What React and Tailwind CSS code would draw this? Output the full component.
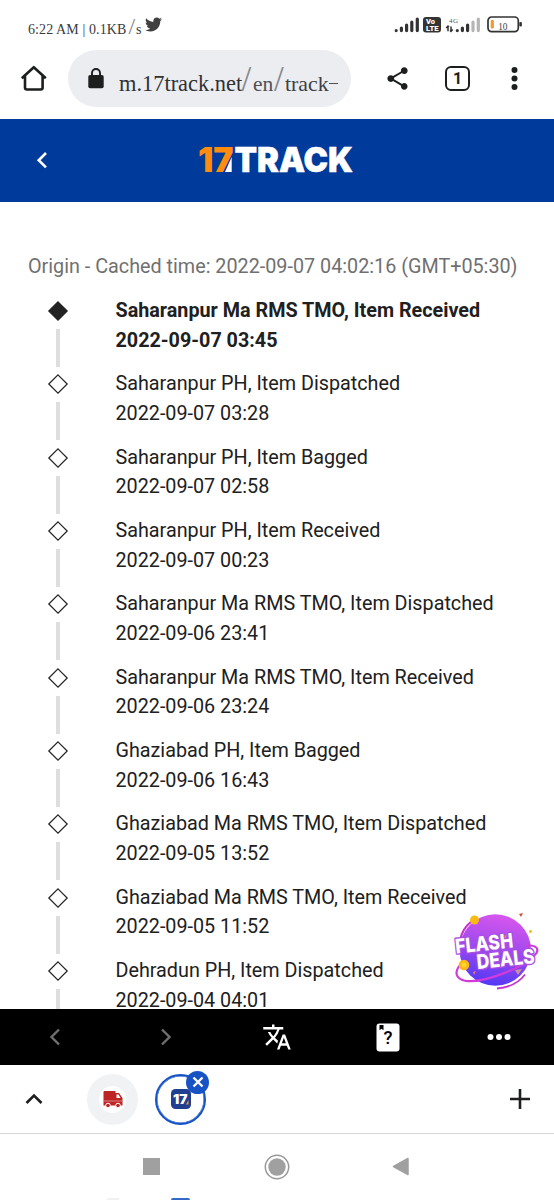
import React from 'react';
import { FaTwitter } from 'react-icons/fa';
import { MdShare, MdTranslate } from 'react-icons/md';

const events = [
  { text: 'Saharanpur Ma RMS TMO, Item Received', time: '2022-09-07 03:45' },
  { text: 'Saharanpur PH, Item Dispatched', time: '2022-09-07 03:28' },
  { text: 'Saharanpur PH, Item Bagged', time: '2022-09-07 02:58' },
  { text: 'Saharanpur PH, Item Received', time: '2022-09-07 00:23' },
  { text: 'Saharanpur Ma RMS TMO, Item Dispatched', time: '2022-09-06 23:41' },
  { text: 'Saharanpur Ma RMS TMO, Item Received', time: '2022-09-06 23:24' },
  { text: 'Ghaziabad PH, Item Bagged', time: '2022-09-06 16:43' },
  { text: 'Ghaziabad Ma RMS TMO, Item Dispatched', time: '2022-09-05 13:52' },
  { text: 'Ghaziabad Ma RMS TMO, Item Received', time: '2022-09-05 11:52' },
  { text: 'Dehradun PH, Item Dispatched', time: '2022-09-04 04:01' },
];

function StatusBar() {
  return (
    <div className="flex h-[50px] shrink-0 items-start pl-7 pr-[31px] text-[#3b3b3b]">
      <div className="mt-4 flex items-baseline whitespace-nowrap font-['Liberation_Serif',serif] text-[14px] leading-5">
        <span className="w-[100.5px] tracking-[0.1px]">6:22 AM | 0.1KB</span>
        <span className="w-[7.5px] text-[24px] text-[#888]">/</span>
        <span>s</span>
      </div>
      <FaTwitter className="ml-[4px] mt-[15.5px] h-[17px] w-[17px] text-[#404040]" />
      <div className="ml-auto mt-4 flex items-start">
        <svg width="26" height="17" viewBox="0 0 26 17" stroke="#333" strokeWidth="3.2" strokeLinecap="round">
          <path d="M2.2 14.5v.1M7.4 12v2.6M12.6 9v5.6M17.8 6v8.6M23.3 3v11.6" />
        </svg>
        <svg className="ml-[3px] overflow-visible" width="18" height="17" viewBox="0 0 18 17">
          <rect y="1" width="18" height="15.5" rx="3" fill="#343434" />
          <g fill="#fff" fontFamily="Roboto, sans-serif" fontWeight="900" fontSize="7.2">
            <text x="3" y="8" textLength="9" lengthAdjust="spacingAndGlyphs">Vo</text>
            <text x="3" y="14.6" textLength="12.5" lengthAdjust="spacingAndGlyphs">LTE</text>
          </g>
        </svg>
        <svg className="ml-1 overflow-visible" width="36" height="17" viewBox="0 0 36 17">
          <text x="4" y="7.3" fontFamily="Liberation Serif, serif" fontSize="7" fill="#555" textLength="9">4G</text>
          <path d="M3 15.2v-5M1.2 12l1.8-2 1 1M6 10.4v5M7.8 13.4 6 15.4l-1-1" fill="none" stroke="#333" strokeWidth="1.5" />
          <g strokeWidth="3.2" strokeLinecap="round">
            <path d="M12.3 14.5v.1M17.4 12v2.6M22.6 9v5.6" stroke="#333" />
            <path d="M28 6v8.6M33.3 3v11.6" stroke="#b5b5b5" />
          </g>
        </svg>
        <svg className="ml-1.5" width="36" height="17" viewBox="0 0 36 17">
          <rect x="1" y="1" width="30.3" height="14.6" rx="3.6" fill="#fff" stroke="#333" strokeWidth="1.7" />
          <rect x="3.7" y="4" width="3.2" height="8.6" rx="1" fill="#ee9b32" />
          <text x="11.2" y="13.5" fontFamily="Liberation Serif, serif" fontSize="9.3" fill="#444">10</text>
          <rect x="32.3" y="6" width="2.6" height="4.6" rx="1" fill="#333" />
        </svg>
      </div>
    </div>
  );
}

function AddressBar() {
  return (
    <div className="flex h-[69px] shrink-0 items-start text-[#1d1f1f]">
      <svg className="ml-5 mt-[14px]" width="28" height="28" viewBox="0 0 28 28" fill="none" stroke="currentColor" strokeWidth="2.6" strokeLinejoin="round">
        <path d="M1.8 14.2 13.8 3.2l12 11M5 12v11.5a2 2 0 0 0 2 2h13.6a2 2 0 0 0 2-2V12" />
      </svg>
      <div className="ml-5 flex h-[56.5px] w-[283px] rounded-full bg-[#ecedf1]">
        <svg className="ml-5 mt-[18px] shrink-0" width="16" height="21" viewBox="0 0 16 21">
          <rect x="0.3" y="7" width="15.4" height="13.2" rx="1.8" fill="currentColor" />
          <path d="M4 8V5a4 4 0 0 1 8 0v3" fill="none" stroke="currentColor" strokeWidth="1.9" />
        </svg>
        <div className="ml-[15px] mt-[14px] flex h-8 items-baseline whitespace-nowrap font-['Liberation_Serif',serif] leading-8 text-[#303234]">
          <span className="w-[122.5px] shrink-0 text-[22.4px]">m.17track.net</span>
          <span className="w-[11.5px] shrink-0 text-[35px] text-[#85878b]">/</span>
          <span className="w-[21px] shrink-0 text-[21.5px] text-[#4f5154]">en</span>
          <span className="w-[11px] shrink-0 text-[35px] text-[#85878b]">/</span>
          <span className="w-[43.5px] shrink-0 text-[21.8px] text-[#3e4043]">track</span>
          <span className="h-[1.5px] w-[9px] shrink-0 -translate-y-3 self-end bg-[#4f5154]" />
        </div>
      </div>
      <MdShare className="ml-[33px] mt-[15px] h-[27px] w-[27px]" />
      <div className="ml-[34px] mt-4 flex h-[25px] w-[25px] items-center justify-center rounded-[6px] border-[2.5px] border-current font-['Roboto',sans-serif] text-[16px] font-bold">
        1
      </div>
      <svg className="ml-[41px] mt-4" width="7" height="25" fill="currentColor">
        <circle cx="3.5" cy="4" r="3" />
        <circle cx="3.5" cy="12.5" r="3" />
        <circle cx="3.5" cy="21" r="3" />
      </svg>
    </div>
  );
}

function Header() {
  return (
    <header className="flex h-[83px] shrink-0 items-center bg-[#003a9b] pb-px text-white">
      <svg className="ml-9" width="12" height="18" viewBox="0 0 12 18" fill="none" stroke="currentColor" strokeWidth="2.6">
        <path d="M10 2 2.7 9.2 10 16.4" />
      </svg>
      <svg className="ml-[150px] overflow-visible" width="156" height="28" viewBox="0 0 156 28" fontFamily="Inter, sans-serif" fontWeight="900" fontSize="34">
        <path d="M33.7 11v15h-6.7z" fill="#fff" />
        <text x="0" y="26" fill="#ff8b0f" textLength="35.5" lengthAdjust="spacingAndGlyphs">17</text>
        <text x="36.5" y="26" fill="#fff" stroke="#fff" strokeWidth="0.5" textLength="118.5" lengthAdjust="spacingAndGlyphs">TRACK</text>
      </svg>
    </header>
  );
}

function TrackingEvent({ event, isLatest }) {
  return (
    <li className="flex h-[73.35px] shrink-0">
      <div className="ml-[47px] flex w-[22px] flex-col items-center pt-1">
        <svg className="shrink-0" width="22" height="22" viewBox="0 0 22 22">
          <path
            d="M11 1.8 20.2 11 11 20.2 1.8 11z"
            fill={isLatest ? '#222' : '#fff'}
            stroke="#222"
            strokeWidth="1.2"
          />
        </svg>
        <span className="mt-[7px] h-[38px] w-[3.5px] shrink-0 bg-[#dedede]" />
      </div>
      <div
        className={`ml-[46.5px] whitespace-nowrap text-[19.75px] leading-[29.5px] text-[#202020] ${isLatest ? 'font-bold' : ''}`}
      >
        <p>{event.text}</p>
        <p>{event.time}</p>
      </div>
    </li>
  );
}

function FlashDeals() {
  return (
    <svg className="absolute right-[15px] top-[708px] overflow-visible" width="88" height="84" viewBox="0 0 88 84">
      <defs>
        <linearGradient id="ball" x1="0.65" y1="0" x2="0.45" y2="1">
          <stop offset="0" stopColor="#d957ee" />
          <stop offset="0.55" stopColor="#9848ed" />
          <stop offset="1" stopColor="#5338f5" />
        </linearGradient>
      </defs>
      <path d="M8 41C8 24 15 12 27 9" fill="none" stroke="#c932c8" strokeWidth="2.2" />
      <circle cx="44.3" cy="40" r="35.7" fill="url(#ball)" />
      <path d="M12 52C2 61 4 69 15 71c19 2 58-14 68-25 7-7 2-12-8-10" fill="none" stroke="#d13bdc" strokeWidth="2.2" />
      <path d="M46 78.5c12-1 22-6 28-14" fill="none" stroke="#c235d3" strokeWidth="1.8" />
      <g fontFamily="Inter, sans-serif" fontWeight="800" fontSize="20" strokeLinejoin="round">
        <g fill="#a94fe4" stroke="#a94fe4" strokeWidth="2.8" aria-hidden="true">
          <text transform="translate(5 43.5) rotate(-6)" textLength="58" lengthAdjust="spacingAndGlyphs">FLASH</text>
          <text transform="translate(26.5 59) rotate(-6)" textLength="58" lengthAdjust="spacingAndGlyphs">DEALS</text>
        </g>
        <g fill="#fff">
          <text transform="translate(5 43.5) rotate(-6)" textLength="58" lengthAdjust="spacingAndGlyphs">FLASH</text>
          <text transform="translate(26.5 59) rotate(-6)" textLength="58" lengthAdjust="spacingAndGlyphs">DEALS</text>
        </g>
      </g>
      <g fill="#f9b916">
        <circle cx="23.5" cy="10" r="4.5" />
        <circle cx="13" cy="55" r="5.3" />
        <circle cx="79.5" cy="21.5" r="1.4" />
      </g>
      <circle cx="13" cy="55" r="2.5" fill="#ffd52d" />
      <path d="m68 4 4-1-2 4z" fill="#dc483d" />
      <path d="m53 26 3-1-2 4zM22 62l3-1-2 4z" fill="#ee7a62" />
      <path d="m64 60 7-1-4 6z" fill="#cb91a3" />
    </svg>
  );
}

function PageToolbar() {
  return (
    <div className="flex h-14 shrink-0 items-center bg-black text-white">
      <div className="flex flex-1 justify-center">
        <svg width="12" height="18" fill="none" stroke="#6f6f6f" strokeWidth="2.4">
          <path d="M10 1.5 2.5 9 10 16.5" />
        </svg>
      </div>
      <div className="flex flex-1 justify-center">
        <svg width="12" height="18" fill="none" stroke="#6f6f6f" strokeWidth="2.4">
          <path d="M2 1.5 9.5 9 2 16.5" />
        </svg>
      </div>
      <div className="flex flex-1 justify-center">
        <MdTranslate className="h-[30px] w-[30px]" />
      </div>
      <div className="flex flex-1 justify-center">
        <svg width="24" height="29" viewBox="0 0 24 29">
          <rect x="0.5" y="0.5" width="23" height="28" rx="3" fill="#fff" />
          <path d="M3.5 2H7.5v5.2l-2-1.5-2 1.5z" fill="#000" />
          <text x="12" y="21" textAnchor="middle" fontFamily="Roboto, sans-serif" fontSize="18.5" fontWeight="500">?</text>
        </svg>
      </div>
      <div className="flex flex-1 justify-center">
        <svg width="24" height="8" fill="currentColor">
          <circle cx="3.5" cy="4" r="3" />
          <circle cx="12" cy="4" r="3" />
          <circle cx="20.5" cy="4" r="3" />
        </svg>
      </div>
    </div>
  );
}

function TabStrip() {
  return (
    <div className="flex h-[69px] shrink-0 items-center border-b-[1.5px] border-[#d8d8d8] text-[#1d1f1f]">
      <svg className="ml-[25px]" width="18" height="12" fill="none" stroke="currentColor" strokeWidth="2.6">
        <path d="M1.5 10 9 2.5l7.5 7.5" />
      </svg>
      <div className="ml-[44px] flex h-[51px] w-[51px] items-center justify-center rounded-full bg-[#f1f2f4]">
        <div className="flex h-[27px] w-[27px] items-center justify-center rounded-full bg-white">
          <svg className="shrink-0" width="20" height="20" viewBox="0 0 20 20">
            <path d="M.5 3q0-1 1-1h11v2H16l3.5 5v7.500H.5z" fill="#bd2424" />
            <path d="M13.5 5.5h2l2 3.5h-4z" fill="#fff" />
            <path d="M.5 12h19" stroke="#e99b9b" strokeWidth=".8" />
            <circle cx="5" cy="16.5" r="2.3" fill="#bd2424" stroke="#fff" />
            <circle cx="15" cy="16.5" r="2.3" fill="#bd2424" stroke="#fff" />
          </svg>
        </div>
      </div>
      <div className="relative ml-[17px] flex h-[51px] w-[51px] items-center justify-center rounded-full border-2 border-[#1753c5] ring-[0.5px] ring-inset ring-[#1753c5]">
        <svg width="20" height="20" viewBox="0 0 20 20">
          <rect width="20" height="20" rx="4.5" fill="#203f91" />
          <text x="2" y="15" fontFamily="Inter, sans-serif" fontWeight="900" fontSize="13" fill="#fff" textLength="14.5" lengthAdjust="spacingAndGlyphs">17</text>
          <path d="m17.5 11v4.5h-2.5z" fill="#ee9b32" />
        </svg>
        <span className="absolute -right-[5px] -top-[5px] flex h-[23px] w-[23px] items-center justify-center rounded-full bg-[#1753c5]">
          <svg width="12" height="12" stroke="#fff" strokeWidth="2.3">
            <path d="m1.5 1.5 9 9M10.5 1.5l-9 9" />
          </svg>
        </span>
      </div>
      <svg className="ml-auto mr-6" width="20" height="20" stroke="currentColor" strokeWidth="2.6">
        <path d="M10 0v20M0 10h20" />
      </svg>
    </div>
  );
}

function SystemNav() {
  return (
    <div className="flex flex-1 flex-col justify-between overflow-hidden">
      <div className="flex h-16 shrink-0 items-center pt-px">
        <span className="ml-[143px] h-[17px] w-[17px] bg-[#a0a0a0]" />
        <svg className="ml-[104px]" width="26" height="26">
          <circle cx="13" cy="13" r="11.7" fill="#fff" stroke="#999" strokeWidth="1.5" />
          <circle cx="13" cy="13" r="8.7" fill="#a0a0a0" />
        </svg>
        <svg className="ml-[102px]" width="17" height="19">
          <path d="M16 1.5v16L1.5 9.5z" fill="#a0a0a0" stroke="#a0a0a0" strokeWidth="1.5" strokeLinejoin="round" />
        </svg>
      </div>
      {/* top edge of the next row of tabs */}
      <div className="flex h-0.5 shrink-0 items-start">
        <span className="ml-[107px] h-0.5 w-3 shrink-0 bg-[#f0f1f2]" />
        <span className="ml-[52px] h-0.5 w-[19px] shrink-0 rounded-t-full bg-[#326bc7]" />
      </div>
    </div>
  );
}

export default function App() {
  return (
    <div className="flex h-[1200px] w-[554px] flex-col overflow-hidden bg-white font-['Roboto',sans-serif]">
      <StatusBar />
      <AddressBar />
      <Header />
      <main className="relative h-[807px] shrink-0 overflow-hidden">
        <h2 className="mt-[50px] whitespace-nowrap pl-7 text-[19.77px] leading-[30px] text-[#707070]">
          Origin - Cached time: 2022-09-07 04:02:16 (GMT+05:30)
        </h2>
        <ul className="mt-[14px] flex flex-col">
          {events.map((event, index) => (
            <TrackingEvent key={event.time} event={event} isLatest={index === 0} />
          ))}
        </ul>
        <FlashDeals />
      </main>
      <PageToolbar />
      <TabStrip />
      <SystemNav />
    </div>
  );
}
